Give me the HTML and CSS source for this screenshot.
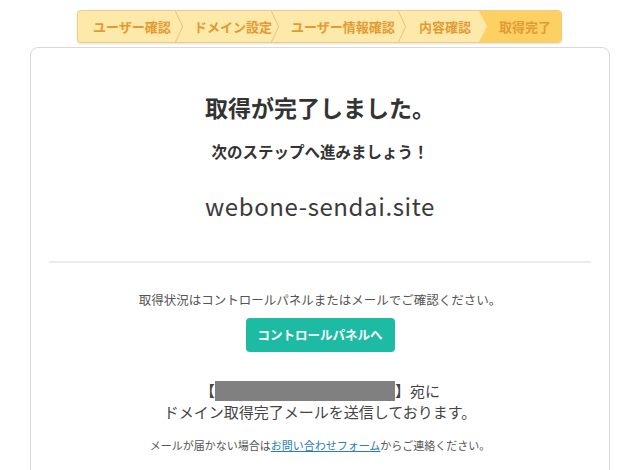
FILE: index.html
```html
<!DOCTYPE html>
<html lang="ja">
<head>
    <meta charset="UTF-8">
    <meta name="viewport" content="width=device-width, initial-scale=1.0">
    <title>取得完了</title>
    <link rel="stylesheet" href="styles.css">
</head>
<body>
    <!-- ステップ表示 -->
    <ol class="steps">
        <li class="step">ユーザー確認</li>
        <li class="step">ドメイン設定</li>
        <li class="step">ユーザー情報確認</li>
        <li class="step">内容確認</li>
        <li class="step current">取得完了</li>
    </ol>

    <!-- 完了カード -->
    <div class="card">
        <h1 class="title">取得が完了しました。</h1>
        <p class="sub">次のステップへ進みましょう！</p>
        <p class="domain">webone-sendai.site</p>

        <hr class="line">

        <p class="note">取得状況はコントロールパネルまたはメールでご確認ください。</p>
        <a class="btn" href="javascript:;">コントロールパネルへ</a>

        <p class="mail">【<span class="mask"></span>】宛に<br>ドメイン取得完了メールを送信しております。</p>
        <p class="small">メールが届かない場合は<a href="javascript:;">お問い合わせフォーム</a>からご連絡ください。</p>
    </div>
</body>
</html>
```

FILE: styles.css
```css
*{
    margin: 0;
    padding: 0;
    box-sizing: border-box;
}
body{
    font-family: "Noto Sans CJK JP", "Noto Sans", sans-serif;
    color: #333;
    background: #fff;
}

/* ステップ */
.steps{
    list-style: none;
    display: flex;
    width: 485px;
    height: 33px;
    margin: 10px 0 0 77px;
    background: #fde9aa;
    border: 1px solid #eccf7e;
    border-radius: 4px;
    overflow: hidden;
    box-shadow: 0 1px 2px rgba(0,0,0,0.12);
}
.step{
    position: relative;
    line-height: 31px;
    font-size: 13px;
    font-weight: bold;
    color: #e49a33;
    white-space: nowrap;
}
.step:nth-child(1){ width: 105px; padding-left: 15px; }
.step:nth-child(2){ width: 96px;  padding-left: 11px; }
.step:nth-child(3){ width: 127px; padding-left: 12px; }
.step:nth-child(4){ width: 80px;  padding-left: 13px; }
.step:nth-child(5){ flex: 1; padding-left: 13px; }

/* 区切りの矢印 */
.step::before,
.step::after{
    content: "";
    position: absolute;
    right: 0;
    width: 8px;
    height: 50%;
    border-right: 1px solid #e6c67c;
}
.step::before{
    top: 0;
    transform: skewX(25deg);
    transform-origin: bottom right;
}
.step::after{
    bottom: 0;
    transform: skewX(-25deg);
    transform-origin: top right;
}
.step:nth-child(4)::before,
.step:nth-child(4)::after,
.step.current::before,
.step.current::after{
    display: none;
}
.step.current{
    margin-left: -7px;
    padding-left: 20px;
    background: #fdd064;
    clip-path: polygon(0 0, 100% 0, 100% 100%, 0 100%, 8px 50%);
}

/* カード */
.card{
    width: 580px;
    margin: 4px 0 0 30px;
    padding: 43px 18px 40px;
    border: 1px solid #d9d9d9;
    border-radius: 8px;
    text-align: center;
}
.title{
    font-size: 23px;
    line-height: 32px;
    font-weight: bold;
    color: #333;
}
.sub{
    margin-top: 16px;
    font-size: 15.5px;
    line-height: 24px;
    font-weight: bold;
    color: #333;
}
.domain{
    margin-top: 26px;
    font-size: 24px;
    line-height: 34px;
    font-weight: 400;
    color: #3a3a3a;
    letter-spacing: 0.6px;
}
.line{
    margin-top: 38px;
    border: 0;
    border-top: 2px solid #ececec;
}
.note{
    margin-top: 28px;
    font-size: 12.5px;
    line-height: 18px;
    color: #555;
}
.btn{
    display: inline-block;
    margin-top: 9px;
    width: 149px;
    height: 34px;
    line-height: 34px;
    background: #1dbba4;
    border-radius: 4px;
    color: #fff;
    font-size: 12.5px;
    font-weight: bold;
    text-decoration: none;
}
.mail{
    margin-top: 28px;
    font-size: 15px;
    line-height: 21px;
    color: #444;
}
.mask{
    display: inline-block;
    width: 180px;
    height: 20px;
    vertical-align: -4px;
    background: #808080;
}
.small{
    margin-top: 15px;
    font-size: 11px;
    line-height: 16px;
    color: #555;
}
.small a{
    color: #2b7db5;
}
```
